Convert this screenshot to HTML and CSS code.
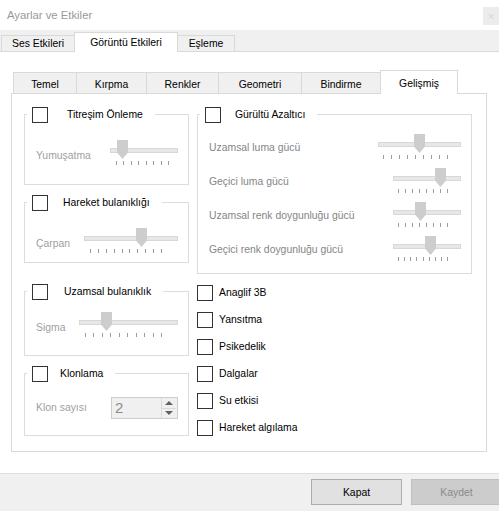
FILE: index.html
```html
<!DOCTYPE html>
<html lang="tr">
<head>
<meta charset="utf-8">
<title>Ayarlar ve Etkiler</title>
<link rel="stylesheet" href="styles.css">
</head>
<body>
<div class="window">
  <div class="titlebar">
    <span class="title">Ayarlar ve Etkiler</span>
    <span class="close">×</span>
  </div>
  <div class="otabs">
    <div class="otab">Ses Etkileri</div>
    <div class="otab active">Görüntü Etkileri</div>
    <div class="otab">Eşleme</div>
  </div>
  <div class="page">
    <div class="itabs">
      <div class="itab">Temel</div>
      <div class="itab">Kırpma</div>
      <div class="itab">Renkler</div>
      <div class="itab">Geometri</div>
      <div class="itab">Bindirme</div>
      <div class="itab active">Gelişmiş</div>
    </div>
    <div class="panel">
      <div class="col">
        <div class="group g1">
          <div class="ghead"><span class="cb"></span><span class="gtitle t19">Titreşim Önleme</span></div>
          <div class="grow">
            <span class="glabel">Yumuşatma</span>
            <div class="slider s68">
              <div class="track"></div>
              <div class="thumb" style="left:7px"></div>
              <div class="ticks tk-short"><i></i><i></i><i></i><i></i><i></i><i></i><i></i><i></i></div>
            </div>
          </div>
        </div>
        <div class="group g2">
          <div class="ghead"><span class="cb"></span><span class="gtitle t15">Hareket bulanıklığı</span></div>
          <div class="grow">
            <span class="glabel">Çarpan</span>
            <div class="slider s94">
              <div class="track"></div>
              <div class="thumb" style="left:52px"></div>
              <div class="ticks"><i></i><i></i><i></i><i></i><i></i><i></i><i></i><i></i><i></i><i></i></div>
            </div>
          </div>
        </div>
        <div class="group g3">
          <div class="ghead"><span class="cb"></span><span class="gtitle t16">Uzamsal bulanıklık</span></div>
          <div class="grow">
            <span class="glabel">Sigma</span>
            <div class="slider s99">
              <div class="track"></div>
              <div class="thumb" style="left:22px"></div>
              <div class="ticks"><i></i><i></i><i></i><i></i><i></i><i></i><i></i><i></i><i></i><i></i></div>
            </div>
          </div>
        </div>
        <div class="group g4">
          <div class="ghead"><span class="cb"></span><span class="gtitle t12">Klonlama</span></div>
          <div class="grow">
            <span class="glabel">Klon sayısı</span>
            <div class="spin">
              <span class="spin-val">2</span>
              <span class="spin-btns"><span class="up"></span><span class="down"></span></span>
            </div>
          </div>
        </div>
      </div>
      <div class="col">
        <div class="group gn">
          <div class="ghead"><span class="cb"></span><span class="gtitle t14">Gürültü Azaltıcı</span></div>
          <div class="nrows">
            <div class="nrow">
              <span class="nlabel">Uzamsal luma gücü</span>
              <div class="slider s83">
                <div class="track"></div>
                <div class="thumb" style="left:36px"></div>
                <div class="ticks tk-right"><i></i><i></i><i></i><i></i><i></i><i></i><i></i><i></i><i></i></div>
              </div>
            </div>
            <div class="nrow">
              <span class="nlabel">Geçici luma gücü</span>
              <div class="slider s68">
                <div class="track"></div>
                <div class="thumb" style="left:42px"></div>
                <div class="ticks tk-right"><i></i><i></i><i></i><i></i><i></i><i></i><i></i><i></i></div>
              </div>
            </div>
            <div class="nrow">
              <span class="nlabel">Uzamsal renk doygunluğu gücü</span>
              <div class="slider s68">
                <div class="track"></div>
                <div class="thumb" style="left:22px"></div>
                <div class="ticks tk-right"><i></i><i></i><i></i><i></i><i></i><i></i><i></i><i></i></div>
              </div>
            </div>
            <div class="nrow">
              <span class="nlabel">Geçici renk doygunluğu gücü</span>
              <div class="slider s68">
                <div class="track"></div>
                <div class="thumb" style="left:32px"></div>
                <div class="ticks tk-right"><i></i><i></i><i></i><i></i><i></i><i></i><i></i><i></i><i></i></div>
              </div>
            </div>
          </div>
        </div>
        <div class="checks">
          <div class="chk"><span class="cb"></span><span>Anaglif 3B</span></div>
          <div class="chk"><span class="cb"></span><span>Yansıtma</span></div>
          <div class="chk"><span class="cb"></span><span>Psikedelik</span></div>
          <div class="chk"><span class="cb"></span><span>Dalgalar</span></div>
          <div class="chk"><span class="cb"></span><span>Su etkisi</span></div>
          <div class="chk"><span class="cb"></span><span>Hareket algılama</span></div>
        </div>
      </div>
    </div>
  </div>
  <div class="bottom">
    <div class="btn">Kapat</div>
    <div class="btn disabled">Kaydet</div>
  </div>
</div>
</body>
</html>
```
FILE: styles.css
```css
* { box-sizing: border-box; }
html, body { margin: 0; padding: 0; }
body {
  width: 499px;
  height: 511px;
  overflow: hidden;
  background: #fff;
  font-family: "Liberation Sans", Arial, sans-serif;
  font-size: 10.4px;
  color: #000;
}
.window { display: flex; flex-direction: column; height: 511px; }

/* title bar */
.titlebar {
  height: 30px;
  flex: none;
  display: flex;
  justify-content: space-between;
  align-items: flex-start;
  background: #fff;
}
.title { margin: 8px 0 0 7px; font-size: 11.3px; line-height: 14px; color: #999; }
.close {
  width: 16px;
  height: 18px;
  margin-top: 7px;
  background: #ececec;
  color: #d6d6d6;
  font-size: 11px;
  line-height: 18px;
  text-align: center;
}

/* outer tabs */
.otabs {
  height: 22px;
  flex: none;
  display: grid;
  grid-template-columns: 74px 103px 57px;
  align-items: end;
  padding-left: 1px;
  background: #f0f0f0;
  border-bottom: 1px solid #d9d9d9;
}
.otab {
  height: 16px;
  margin-left: -1px;
  border: 1px solid #d9d9d9;
  border-bottom: none;
  background: #f0f0f0;
  display: flex;
  align-items: center;
  justify-content: center;
  white-space: nowrap;
}
.otab:first-child { margin-left: 0; }
.otab.active {
  height: 20px;
  margin-bottom: -1px;
  background: #fff;
  position: relative;
  z-index: 1;
}

/* page */
.page {
  flex: 1;
  background: #fff;
  padding: 18px 12px 21px 11px;
  display: flex;
  flex-direction: column;
}
.itabs {
  height: 23px;
  flex: none;
  display: grid;
  grid-template-columns: 64px 70px 72px 83px 79px 77px;
  align-items: end;
  padding-left: 2px;
}
.itab {
  height: 21px;
  margin-left: -1px;
  padding-top: 2px;
  border: 1px solid #d9d9d9;
  border-bottom: none;
  background: #f0f0f0;
  display: flex;
  align-items: center;
  justify-content: center;
  white-space: nowrap;
}
.itab:first-child { margin-left: 0; }
.itab.active {
  height: 24px;
  margin-bottom: -1px;
  background: #fff;
  position: relative;
  z-index: 1;
}

.panel {
  height: 359px;
  flex: none;
  border: 1px solid #d9d9d9;
  display: grid;
  grid-template-columns: 165px 275px;
  column-gap: 8px;
  align-items: start;
  padding: 20px 0 0 12px;
}
.col { display: flex; flex-direction: column; }

/* group boxes */
.group { border: 1px solid #dcdcdc; }
.g1 { height: 71px; }
.g2 { height: 61px; margin-top: 17px; }
.g3 { height: 65px; margin-top: 28px; }
.g4 { height: 63px; margin-top: 17px; }
.gn { height: 160px; }

.ghead {
  display: flex;
  align-items: center;
  width: max-content;
  height: 16px;
  margin: -8px 0 0 2px;
  padding: 0 12px 0 5px;
  background: #fff;
}
.cb {
  flex: none;
  width: 16px;
  height: 16px;
  border: 1px solid #333;
  background: #fff;
}
.gtitle { margin-bottom: 2px; white-space: nowrap; }
.t19 { margin-left: 19px; }
.t16 { margin-left: 16px; }
.t15 { margin-left: 15px; }
.t14 { margin-left: 14px; }
.t12 { margin-left: 12px; }

.grow {
  display: flex;
  justify-content: space-between;
  align-items: flex-start;
  padding: 0 10px 0 11px;
  margin-top: 17px;
}
.g3 .grow { margin-top: 12px; }
.g4 .grow { margin-top: 15px; align-items: center; }
.glabel { color: #a0a0a0; line-height: 14px; margin-top: 9px; white-space: nowrap; }
.g4 .glabel { margin-top: 0; }

/* sliders */
.slider { position: relative; height: 25px; flex: none; }
.s68 { width: 68px; }
.s83 { width: 83px; }
.s94 { width: 94px; }
.s99 { width: 99px; }
.track {
  margin-top: 8px;
  height: 5px;
  border: 1px solid #d8d8d8;
  background: #e7e7e7;
}
.thumb {
  position: absolute;
  top: 0;
  width: 11px;
  height: 19px;
  background: #cdcdcd;
  clip-path: polygon(0 0, 100% 0, 100% 66%, 50% 100%, 0 66%);
}
.ticks {
  display: flex;
  justify-content: space-between;
  margin: 8px 16px 0 6px;
}
.tk-short { margin-right: 9px; }
.tk-right { margin-left: 5px; margin-right: 13px; }
.ticks i { display: block; width: 1px; height: 4px; background: #9d9d9d; }

/* spin box */
.spin {
  width: 67px;
  height: 22px;
  border: 1px solid #cccccc;
  background: #f0f0f0;
  display: flex;
  justify-content: space-between;
  align-items: center;
  padding: 0 1px 0 3px;
}
.spin-val { color: #8d8d8d; font-size: 15px; line-height: 18px; }
.spin-btns {
  width: 15px;
  height: 20px;
  display: flex;
  flex-direction: column;
  border-left: 1px solid #dadada;
}
.spin-btns span { flex: 1; display: flex; align-items: center; justify-content: center; }
.spin-btns .up { border-bottom: 1px solid #dadada; }
.up::before {
  content: "";
  border-left: 4px solid transparent;
  border-right: 4px solid transparent;
  border-bottom: 4px solid #606060;
}
.down::before {
  content: "";
  border-left: 4px solid transparent;
  border-right: 4px solid transparent;
  border-top: 4px solid #606060;
}

/* noise rows */
.nrows { margin-top: 11px; }
.nrow {
  display: flex;
  justify-content: space-between;
  align-items: flex-start;
  padding: 0 10px 0 11px;
  height: 34px;
}
.nlabel { color: #858585; line-height: 14px; margin-top: 7px; white-space: nowrap; }

/* check list */
.checks { display: flex; flex-direction: column; gap: 11px; margin-top: 11px; }
.chk { display: flex; align-items: center; gap: 6px; height: 16px; }
.chk span:last-child { margin-bottom: 1px; }

/* bottom bar */
.bottom {
  height: 38px;
  flex: none;
  margin-right: -3px;
  background: #f0f0f0;
  border-top: 1px solid #dfdfdf;
  display: flex;
  justify-content: flex-end;
  align-items: flex-start;
  gap: 9px;
  padding-top: 5px;
}
.btn {
  width: 91px;
  height: 26px;
  border: 1px solid #adadad;
  background: #e1e1e1;
  display: flex;
  align-items: center;
  justify-content: center;
}
.btn.disabled { background: #cccccc; border-color: #bfbfbf; color: #8a8a8a; }
```
